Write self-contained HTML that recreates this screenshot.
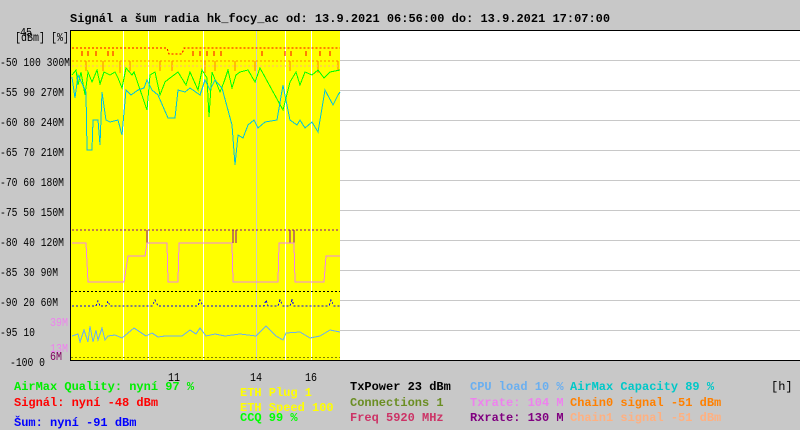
<!DOCTYPE html>
<html><head><meta charset="utf-8"><style>
html,body{margin:0;padding:0;background:#c8c8c8;}
svg{display:block}
text{font-family:"Liberation Mono",monospace;font-size:12px;}
</style></head><body>
<svg width="800" height="430" xmlns="http://www.w3.org/2000/svg" shape-rendering="crispEdges">
<rect width="800" height="430" fill="#c8c8c8"/>
<text x="70" y="22" font-weight="bold" fill="#000">Signál a šum radia hk_focy_ac od: 13.9.2021 06:56:00 do: 13.9.2021 17:07:00</text>
<rect x="70" y="30" width="730" height="330" fill="#fff"/>
<rect x="71" y="31" width="269" height="329" fill="#ffff00"/>
<g stroke="#c8c8c8" stroke-width="1">
<line x1="340" y1="60.5" x2="800" y2="60.5"/><line x1="340" y1="90.5" x2="800" y2="90.5"/><line x1="340" y1="120.5" x2="800" y2="120.5"/><line x1="340" y1="150.5" x2="800" y2="150.5"/><line x1="340" y1="180.5" x2="800" y2="180.5"/><line x1="340" y1="210.5" x2="800" y2="210.5"/><line x1="340" y1="240.5" x2="800" y2="240.5"/><line x1="340" y1="270.5" x2="800" y2="270.5"/><line x1="340" y1="300.5" x2="800" y2="300.5"/><line x1="340" y1="330.5" x2="800" y2="330.5"/>
</g>
<g stroke="#fff" stroke-width="1">
<line x1="123.5" y1="31" x2="123.5" y2="360"/><line x1="148.5" y1="31" x2="148.5" y2="360"/><line x1="203.5" y1="31" x2="203.5" y2="360"/><line x1="285.5" y1="31" x2="285.5" y2="360"/><line x1="311.5" y1="31" x2="311.5" y2="360"/>
</g>
<line x1="256.5" y1="31" x2="256.5" y2="360" stroke="#ccc"/>
<line x1="70.5" y1="30" x2="70.5" y2="361" stroke="#000"/>
<line x1="70" y1="360.5" x2="800" y2="360.5" stroke="#000"/>
<line x1="70" y1="30.5" x2="800" y2="30.5" stroke="#000"/>
<polyline fill="none" stroke="#ff0000" stroke-dasharray="2,2" points="72,48 167,48 169,54 182,54 184,48 340,48"/>
<g stroke="#ff0000" fill="none"><path d="M82 51v5M88 51v5M96 51v5M108 51v5M113 51v5M193 51v5M200 51v5M207 51v5M214 51v5M221 51v5M262 51v5M285 51v5M291 51v5M306 51v5M320 51v5M330 51v5"/></g>
<polyline fill="none" stroke="#ff8000" stroke-dasharray="2,2" points="72,61 340,61"/>
<g stroke="#ff8000"><path d="M86 61v10M103 61v10M120 61v12M130 61v10M160 61v10M172 61v10M205 61v12M215 61v10M235 61v10M255 61v10M290 61v10M318 61v12M338 61v10"/></g>
<polyline fill="none" stroke="#ffb080" stroke-dasharray="2,2" points="72,66 340,66"/>
<polyline fill="none" stroke="#00ff00" points="72,75 76,70 78,85 81,72 85,95 88,72 92,82 97,70 100,84 104,72 110,75 115,72 118,78 122,88 126,68 132,75 134,72 147,110 150,75 155,72 160,95 165,82 170,78 178,72 186,85 190,72 198,90 202,70 207,78 209,117 212,72 220,92 224,82 228,70 232,88 236,75 240,72 248,70 255,82 260,68 283,110 290,82 296,72 300,85 305,72 312,75 318,70 324,78 330,72 340,70"/>
<polyline fill="none" stroke="#00c0e0" points="72,77 75,98 78,75 86,92 87,150 92,150 93,120 98,120 100,145 102,92 106,120 110,122 118,120 122,135 126,90 131,95 138,90 144,88 147,80 152,90 158,95 168,118 175,118 178,90 185,92 190,88 200,95 205,80 210,90 215,80 222,88 232,125 235,165 238,135 243,138 248,125 254,120 258,128 265,122 277,120 283,85 290,120 297,125 300,120 305,128 312,122 318,132 325,90 333,105 338,95 340,92"/>
<polyline fill="none" stroke="#800090" stroke-dasharray="2,2" points="72,230 340,230"/>
<g stroke="#800090"><path d="M147 230v13M233 230v13M236 230v13M290 230v13M294 230v13"/></g>
<polyline fill="none" stroke="#ee82ee" points="72,243 86,243 88,282 124,282 128,256 145,256 147,243 167,243 168,282 178,282 179,243 232,243 233,282 278,282 279,243 294,243 295,282 324,282 326,256 340,256"/>
<line x1="71" y1="291.5" x2="340" y2="291.5" stroke="#000" stroke-dasharray="2,2"/>
<polyline fill="none" stroke="#0000ff" stroke-dasharray="2,2" points="72,306 96,306 98,301 100,306 106,306 108,301 110,306 152,306 155,300 158,306 198,306 200,300 203,306 264,306 266,300 268,306 278,306 280,300 283,306 290,306 292,300 294,306 329,306 331,300 334,306 340,306"/>
<polyline fill="none" stroke="#6aaff0" points="72,336 78,334 80,342 84,330 88,342 90,326 93,342 96,330 98,340 102,328 105,340 108,336 115,335 122,338 128,333 134,328 140,332 146,336 152,333 158,337 165,336 182,336 190,330 196,334 200,328 206,336 215,334 225,336 240,334 256,336 266,326 270,330 276,336 283,340 286,333 300,332 310,338 320,336 330,330 340,332"/>
<line x1="71" y1="357.5" x2="340" y2="357.5" stroke="#808000" stroke-dasharray="2,2"/>
<g fill="#000" lengthAdjust="spacingAndGlyphs">
<text x="20" y="36" textLength="12" lengthAdjust="spacingAndGlyphs">45</text>
<text x="15" y="41" textLength="54" lengthAdjust="spacingAndGlyphs">[dBm] [%]</text>
<text x="0" y="66" textLength="70" lengthAdjust="spacingAndGlyphs">-50 100 300M</text>
<text x="0" y="96" textLength="64" lengthAdjust="spacingAndGlyphs">-55 90 270M</text>
<text x="0" y="126" textLength="64" lengthAdjust="spacingAndGlyphs">-60 80 240M</text>
<text x="0" y="156" textLength="64" lengthAdjust="spacingAndGlyphs">-65 70 210M</text>
<text x="0" y="186" textLength="64" lengthAdjust="spacingAndGlyphs">-70 60 180M</text>
<text x="0" y="216" textLength="64" lengthAdjust="spacingAndGlyphs">-75 50 150M</text>
<text x="0" y="246" textLength="64" lengthAdjust="spacingAndGlyphs">-80 40 120M</text>
<text x="0" y="276" textLength="58" lengthAdjust="spacingAndGlyphs">-85 30 90M</text>
<text x="0" y="306" textLength="58" lengthAdjust="spacingAndGlyphs">-90 20 60M</text>
<text x="0" y="336" textLength="35" lengthAdjust="spacingAndGlyphs">-95 10</text>
<text x="10" y="366" textLength="35" lengthAdjust="spacingAndGlyphs">-100 0</text>
<text x="168" y="381" textLength="12" lengthAdjust="spacingAndGlyphs">11</text>
<text x="250" y="381" textLength="12" lengthAdjust="spacingAndGlyphs">14</text>
<text x="305" y="381" textLength="12" lengthAdjust="spacingAndGlyphs">16</text>
<text x="50" y="326" fill="#ee82ee" textLength="18" lengthAdjust="spacingAndGlyphs">39M</text>
<text x="50" y="352" fill="#ee82ee" textLength="18" lengthAdjust="spacingAndGlyphs">13M</text>
<text x="50" y="360" fill="#800060" textLength="12" lengthAdjust="spacingAndGlyphs">6M</text>
</g>
<g font-weight="bold">
<text x="14" y="390" fill="#00ee00">AirMax Quality: nyní 97 %</text>
<text x="14" y="406" fill="#ff0000">Signál: nyní -48 dBm</text>
<text x="14" y="426" fill="#0000ff">Šum: nyní -91 dBm</text>
<text x="240" y="396" fill="#ffff00">ETH Plug 1</text>
<text x="240" y="411" fill="#ffff00">ETH Speed 100</text>
<text x="240" y="421" fill="#00ff00">CCQ 99 %</text>
<text x="350" y="390" fill="#000">TxPower 23 dBm</text>
<text x="350" y="406" fill="#6b8e23">Connections 1</text>
<text x="350" y="421" fill="#cc3366">Freq 5920 MHz</text>
<text x="470" y="390" fill="#6aaff0">CPU load 10 %</text>
<text x="470" y="406" fill="#ee82ee">Txrate: 104 M</text>
<text x="470" y="421" fill="#800080">Rxrate: 130 M</text>
<text x="570" y="390" fill="#00c8c8">AirMax Capacity 89 %</text>
<text x="570" y="406" fill="#ff8000">Chain0 signal -51 dBm</text>
<text x="570" y="421" fill="#ffb080">Chain1 signal -51 dBm</text>
</g>
<text x="771" y="390" fill="#000" font-size="11">[h]</text>
</svg>
</body></html>
